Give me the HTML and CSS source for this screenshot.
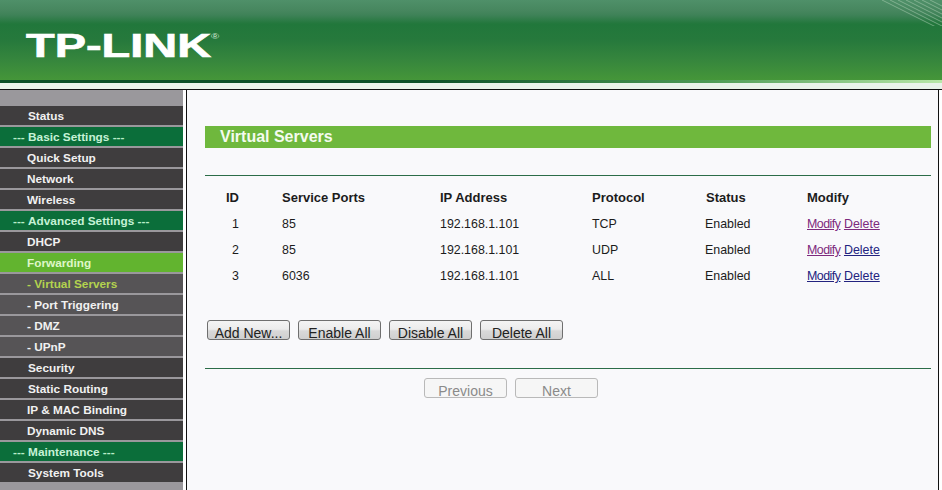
FILE: index.html
```html
<!DOCTYPE html>
<html lang="en">
<head>
<meta charset="utf-8">
<title>Virtual Servers</title>
<link rel="stylesheet" href="styles.css">
</head>
<body>
<header class="banner">
  <span class="logo">TP-LINK<sup class="reg">®</sup></span>
  <svg class="texture" width="60" height="26" viewBox="0 0 60 26" aria-hidden="true">
    <g stroke="#a9ccb0" stroke-opacity=".55" stroke-width="1" fill="none">
      <path d="M0 0L60 30"/><path d="M8 0L60 26"/><path d="M16 0L60 22"/><path d="M24 0L60 18"/><path d="M32 0L60 14"/><path d="M40 0L60 10"/><path d="M48 0L60 6"/>
    </g>
  </svg>
</header>
<div class="stripe"></div>
<div class="layout">
  <nav class="menu">
    <a class="item s1">Status</a>
    <a class="item group">--- <b class="hl">Basic Settings</b> ---</a>
    <a class="item">Quick Setup</a>
    <a class="item">Network</a>
    <a class="item">Wireless</a>
    <a class="item group">--- <b class="hl">Advanced Settings</b> ---</a>
    <a class="item">DHCP</a>
    <a class="item active">Forwarding</a>
    <a class="item sub current">- Virtual Servers</a>
    <a class="item sub">- Port Triggering</a>
    <a class="item sub">- DMZ</a>
    <a class="item sub">- UPnP</a>
    <a class="item s1">Security</a>
    <a class="item s1">Static Routing</a>
    <a class="item">IP &amp; MAC Binding</a>
    <a class="item">Dynamic DNS</a>
    <a class="item group">--- <b class="hl">Maintenance</b> ---</a>
    <a class="item s1">System Tools</a>
  </nav>
  <main class="main">
    <h1 class="title">Virtual Servers</h1>
    <div class="rule"></div>
    <table class="grid">
      <thead>
        <tr><th class="c-id">ID</th><th class="c-port">Service Ports</th><th class="c-ip">IP Address</th><th class="c-proto">Protocol</th><th class="c-status">Status</th><th>Modify</th></tr>
      </thead>
      <tbody>
        <tr><td class="c-id">1</td><td>85</td><td>192.168.1.101</td><td>TCP</td><td>Enabled</td><td><a class="link seen mod">Modify</a> <a class="link seen">Delete</a></td></tr>
        <tr><td class="c-id">2</td><td>85</td><td>192.168.1.101</td><td>UDP</td><td>Enabled</td><td><a class="link seen mod">Modify</a> <a class="link">Delete</a></td></tr>
        <tr><td class="c-id">3</td><td>6036</td><td>192.168.1.101</td><td>ALL</td><td>Enabled</td><td><a class="link mod">Modify</a> <a class="link">Delete</a></td></tr>
      </tbody>
    </table>
    <div class="actions">
      <button class="btn">Add New...</button>
      <button class="btn">Enable All</button>
      <button class="btn">Disable All</button>
      <button class="btn">Delete All</button>
    </div>
    <div class="rule rule-low"></div>
    <div class="pager">
      <button class="btn off" disabled>Previous</button>
      <button class="btn off" disabled>Next</button>
    </div>
  </main>
</div>
</body>
</html>
```

FILE: styles.css
```css
* { box-sizing: border-box; }
html, body { margin: 0; height: 490px; overflow: hidden; }
body { background: #eef5ee; font-family: "Liberation Sans", Arial, sans-serif; color: #1c1c1c; }

.banner {
  position: relative;
  height: 80px;
  background: linear-gradient(180deg, #4f9069 0, #47875f 10px, #3f8258 15px, #21773b 24px, #26793c 40px, #36863d 60px, #459639 80px);
  overflow: hidden;
}
.logo {
  position: absolute;
  left: 26px;
  top: 25px;
  font-size: 34px;
  line-height: 40px;
  font-weight: 700;
  color: #fff;
  white-space: nowrap;
  transform: scaleX(1.38);
  transform-origin: left top;
  -webkit-text-stroke: .7px #fff;
}
.reg { font-size: 8px; font-weight: 400; vertical-align: 18px; line-height: 0; color: #cfe6d3; -webkit-text-stroke: 0; }
.texture { position: absolute; top: 0; right: 0; }

.stripe {
  height: 10px;
  background: #e9f3ea;
  border-bottom: 1px solid #111;
}
.stripe::before {
  content: "";
  display: block;
  height: 3px;
  background: linear-gradient(90deg, #0b5027 0, #0b5027 45%, #4c9a55 75%, #b8e8a8 100%);
}

.layout { display: flex; height: 400px; background: #fff; }

.menu {
  width: 183px;
  flex: none;
  padding-top: 16px;
  background: #9a989c;
  display: flex;
  flex-direction: column;
}
.item {
  display: block;
  height: 19px;
  margin-bottom: 2px;
  padding-left: 27px;
  background: #3f3d3e;
  color: #f1f1f1;
  font-size: 11.8px;
  font-weight: 700;
  line-height: 21px;
  white-space: nowrap;
}
.s1 { padding-left: 28px; }
.group { background: #0b6e3a; color: #b9ecc9; padding-left: 13px; }
.hl { color: #c5f2d6; }
.active { background: #62b42f; color: #dff7c8; }
.sub { background: #565456; }
.current { color: #b3d24f; }

.main {
  flex: 1;
  margin-left: 3px;
  margin-right: 3px;
  border-left: 1px solid #111;
  border-right: 1px solid #111;
  background: #f9f9fb;
  padding: 36px 7px 0 18px;
}
.title {
  margin: 0;
  height: 22px;
  background: #6fb83d;
  color: #f4fbef;
  font-size: 16px;
  font-weight: 700;
  line-height: 22px;
  padding-left: 15px;
}
.rule { height: 1px; background: #2c6d48; margin-top: 27px; }
.rule-low { margin-top: 28px; }

.grid { border-collapse: collapse; table-layout: fixed; width: 100%; margin-top: 7px; font-size: 12.4px; }
.grid th, .grid td { padding: 0; text-align: left; font-weight: 400; }
.grid th { height: 28px; font-weight: 700; font-size: 13px; }
.grid td { height: 26px; }
.grid th:nth-child(1) { width: 77px; }
.grid th:nth-child(2) { width: 158px; }
.grid th:nth-child(3) { width: 152px; }
.grid th:nth-child(4) { width: 113px; }
.grid th:nth-child(5) { width: 102px; }
.grid th.c-status { padding-left: 1px; }
.grid th.c-id { padding-left: 21px; }
.grid td.c-id { padding-left: 27px; }

.link { color: #23237f; text-decoration: underline; }
.mod { letter-spacing: -.5px; }
.seen { color: #7d2a7d; }

.actions { display: flex; gap: 8px; margin: 31px 0 0 2px; }
.btn {
  height: 20px;
  width: 83px;
  padding: 5px 0 0;
  border: 1px solid #6f6f6f;
  border-radius: 3px;
  background: linear-gradient(180deg, #f4f4f4 0, #ececec 45%, #d9d9d9 55%, #cfcfcf 100%);
  font-family: "Liberation Sans", Arial, sans-serif;
  font-size: 14px;
  line-height: 15px;
  color: #222;
}
.off { border-color: #b9b9b9; background: #f6f6f6; color: #8a8a8a; }
.pager { display: flex; gap: 8px; margin: 9px 0 0 219px; }
```
